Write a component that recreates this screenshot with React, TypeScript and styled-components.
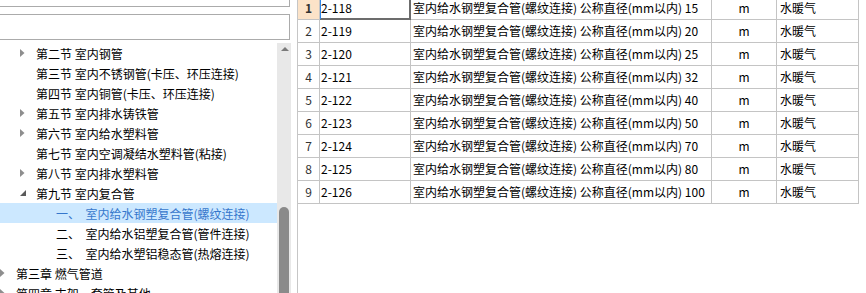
import React from 'react';
import styled, { createGlobalStyle } from 'styled-components';

const Global = createGlobalStyle`
  html, body { margin: 0; padding: 0; background: #fff; overflow: hidden; }
  body { width: 866px; height: 293px; }
`;

const Frame = styled.div`
  display: flex;
  width: 866px;
  height: 293px;
  overflow: hidden;
  background: #fff;
`;

const LeftPanel = styled.div`
  width: 291px;
  flex: none;
  display: flex;
  flex-direction: column;
  overflow: hidden;
`;

const FieldBox = styled.div<{ $h: number; $mt: number }>`
  flex: none;
  box-sizing: border-box;
  width: 291px;
  height: ${(p) => p.$h}px;
  margin: ${(p) => p.$mt}px 0 0 -1px;
  border: 1px solid #ababab;
  background: #fff;
`;

const TreeWrap = styled.div`
  flex: 1;
  display: flex;
  margin-top: 3px;
  min-height: 0;
`;

const TreeList = styled.div`
  width: 277px;
  flex: none;
  overflow: hidden;
  font-family: "Noto Sans CJK SC", "Noto Sans", sans-serif;
  font-size: 12px;
  color: #000;
`;

const TreeRow = styled.div<{ $level: number; $selected?: boolean }>`
  display: flex;
  align-items: center;
  height: 20px;
  padding-left: ${(p) => (p.$level - 1) * 20}px;
  background: ${(p) => (p.$selected ? '#cce8ff' : 'transparent')};
  color: ${(p) => (p.$selected ? '#3677cc' : '#000')};
  white-space: pre;
`;

const Toggle = styled.span`
  width: 16px;
  flex: none;
  display: flex;
  align-items: center;
`;

const Scrollbar = styled.div`
  width: 14px;
  flex: none;
  background: #e8e8e8;
  display: flex;
  flex-direction: column;
`;

const ScrollUp = styled.div`
  height: 12px;
  flex: none;
  display: flex;
  align-items: center;
  justify-content: center;
  padding-left: 1px;
`;

const ScrollTrack = styled.div`
  height: 152px;
  flex: none;
`;

const ScrollThumb = styled.div`
  flex: 1;
  width: 10px;
  margin-left: 2px;
  background: #8a8a8a;
  border-radius: 5px 5px 0 0;
`;

const RightPanel = styled.div`
  flex: 1;
  margin-left: 6px;
  border-left: 1px solid #c6c6c6;
  overflow: hidden;
`;

const Grid = styled.div`
  display: grid;
  grid-template-columns: 22px 91px 301px 65px 82px;
  margin-top: -3px;
  font-family: "Noto Sans CJK SC", "Noto Sans", sans-serif;
  font-size: 12px;
  color: #000;
`;

const Cell = styled.div<{ $align?: 'left' | 'center'; $pad?: number; $bg?: string; $focus?: boolean; $bold?: boolean }>`
  box-sizing: border-box;
  height: 23px;
  line-height: 22px;
  border-right: 1px solid #c4c4c4;
  border-bottom: 1px solid #c4c4c4;
  padding-left: ${(p) => p.$pad ?? 0}px;
  text-align: ${(p) => p.$align ?? 'left'};
  background: ${(p) => p.$bg ?? '#fff'};
  font-weight: ${(p) => (p.$bold ? 700 : 400)};
  white-space: nowrap;
  overflow: hidden;
  ${(p) =>
    p.$focus
      ? `border-right-color:#6c6c6c; border-bottom-color:#6c6c6c; box-shadow: inset 1px 0 0 #2f86e8, inset -1px -1px 0 #6c6c6c;`
      : ''}
`;

const RowNum = styled(Cell)`
  color: #333;
`;

const Collapsed = () => (
  <svg width="5" height="8" viewBox="0 0 5 8">
    <polygon points="0,0 4.5,4 0,8" fill="#8e8e8e" />
  </svg>
);

const Expanded = () => (
  <svg width="6" height="6" viewBox="0 0 6 6">
    <polygon points="6,0 6,6 0,6" fill="#5a5a5a" />
  </svg>
);

type Node = { level: number; text: string; arrow?: 'c' | 'e'; selected?: boolean };

const tree: Node[] = [
  { level: 2, text: '第二节 室内钢管', arrow: 'c' },
  { level: 2, text: '第三节 室内不锈钢管(卡压、环压连接)' },
  { level: 2, text: '第四节 室内铜管(卡压、环压连接)' },
  { level: 2, text: '第五节 室内排水铸铁管', arrow: 'c' },
  { level: 2, text: '第六节 室内给水塑料管', arrow: 'c' },
  { level: 2, text: '第七节 室内空调凝结水塑料管(粘接)' },
  { level: 2, text: '第八节 室内排水塑料管', arrow: 'c' },
  { level: 2, text: '第九节 室内复合管', arrow: 'e' },
  { level: 3, text: '一、  室内给水钢塑复合管(螺纹连接)', selected: true },
  { level: 3, text: '二、  室内给水铝塑复合管(管件连接)' },
  { level: 3, text: '三、  室内给水塑铝稳态管(热熔连接)' },
  { level: 1, text: '第三章 燃气管道', arrow: 'c' },
  { level: 1, text: '第四章 支架、套管及其他', arrow: 'c' },
];

const rows = [
  ['2-118', '15'],
  ['2-119', '20'],
  ['2-120', '25'],
  ['2-121', '32'],
  ['2-122', '40'],
  ['2-123', '50'],
  ['2-124', '70'],
  ['2-125', '80'],
  ['2-126', '100'],
];

export default function App() {
  return (
    <>
      <Global />
      <Frame>
        <LeftPanel>
          <FieldBox $h={27} $mt={-20} />
          <FieldBox $h={26} $mt={7} />
          <TreeWrap>
            <TreeList>
              {tree.map((n, i) => (
                <TreeRow key={i} $level={n.level} $selected={n.selected}>
                  <Toggle>{n.arrow === 'c' ? <Collapsed /> : n.arrow === 'e' ? <Expanded /> : null}</Toggle>
                  {n.text}
                </TreeRow>
              ))}
            </TreeList>
            <Scrollbar>
              <ScrollUp>
                <svg width="8" height="4" viewBox="0 0 8 4">
                  <polygon points="0,4 4,0 8,4" fill="#7a7a7a" />
                </svg>
              </ScrollUp>
              <ScrollTrack />
              <ScrollThumb />
            </Scrollbar>
          </TreeWrap>
        </LeftPanel>
        <RightPanel>
          <Grid>
            {rows.map(([code, d], i) => (
              <React.Fragment key={code}>
                <RowNum $align="center" $bg={i === 0 ? '#fce3c8' : '#fff'} $bold={i === 0}>
                  {i + 1}
                </RowNum>
                <Cell $pad={1} $focus={i === 0}>{code}</Cell>
                <Cell $pad={2}>{`室内给水钢塑复合管(螺纹连接) 公称直径(mm以内) ${d}`}</Cell>
                <Cell $align="center">m</Cell>
                <Cell $pad={3}>水暖气</Cell>
              </React.Fragment>
            ))}
          </Grid>
        </RightPanel>
      </Frame>
    </>
  );
}
